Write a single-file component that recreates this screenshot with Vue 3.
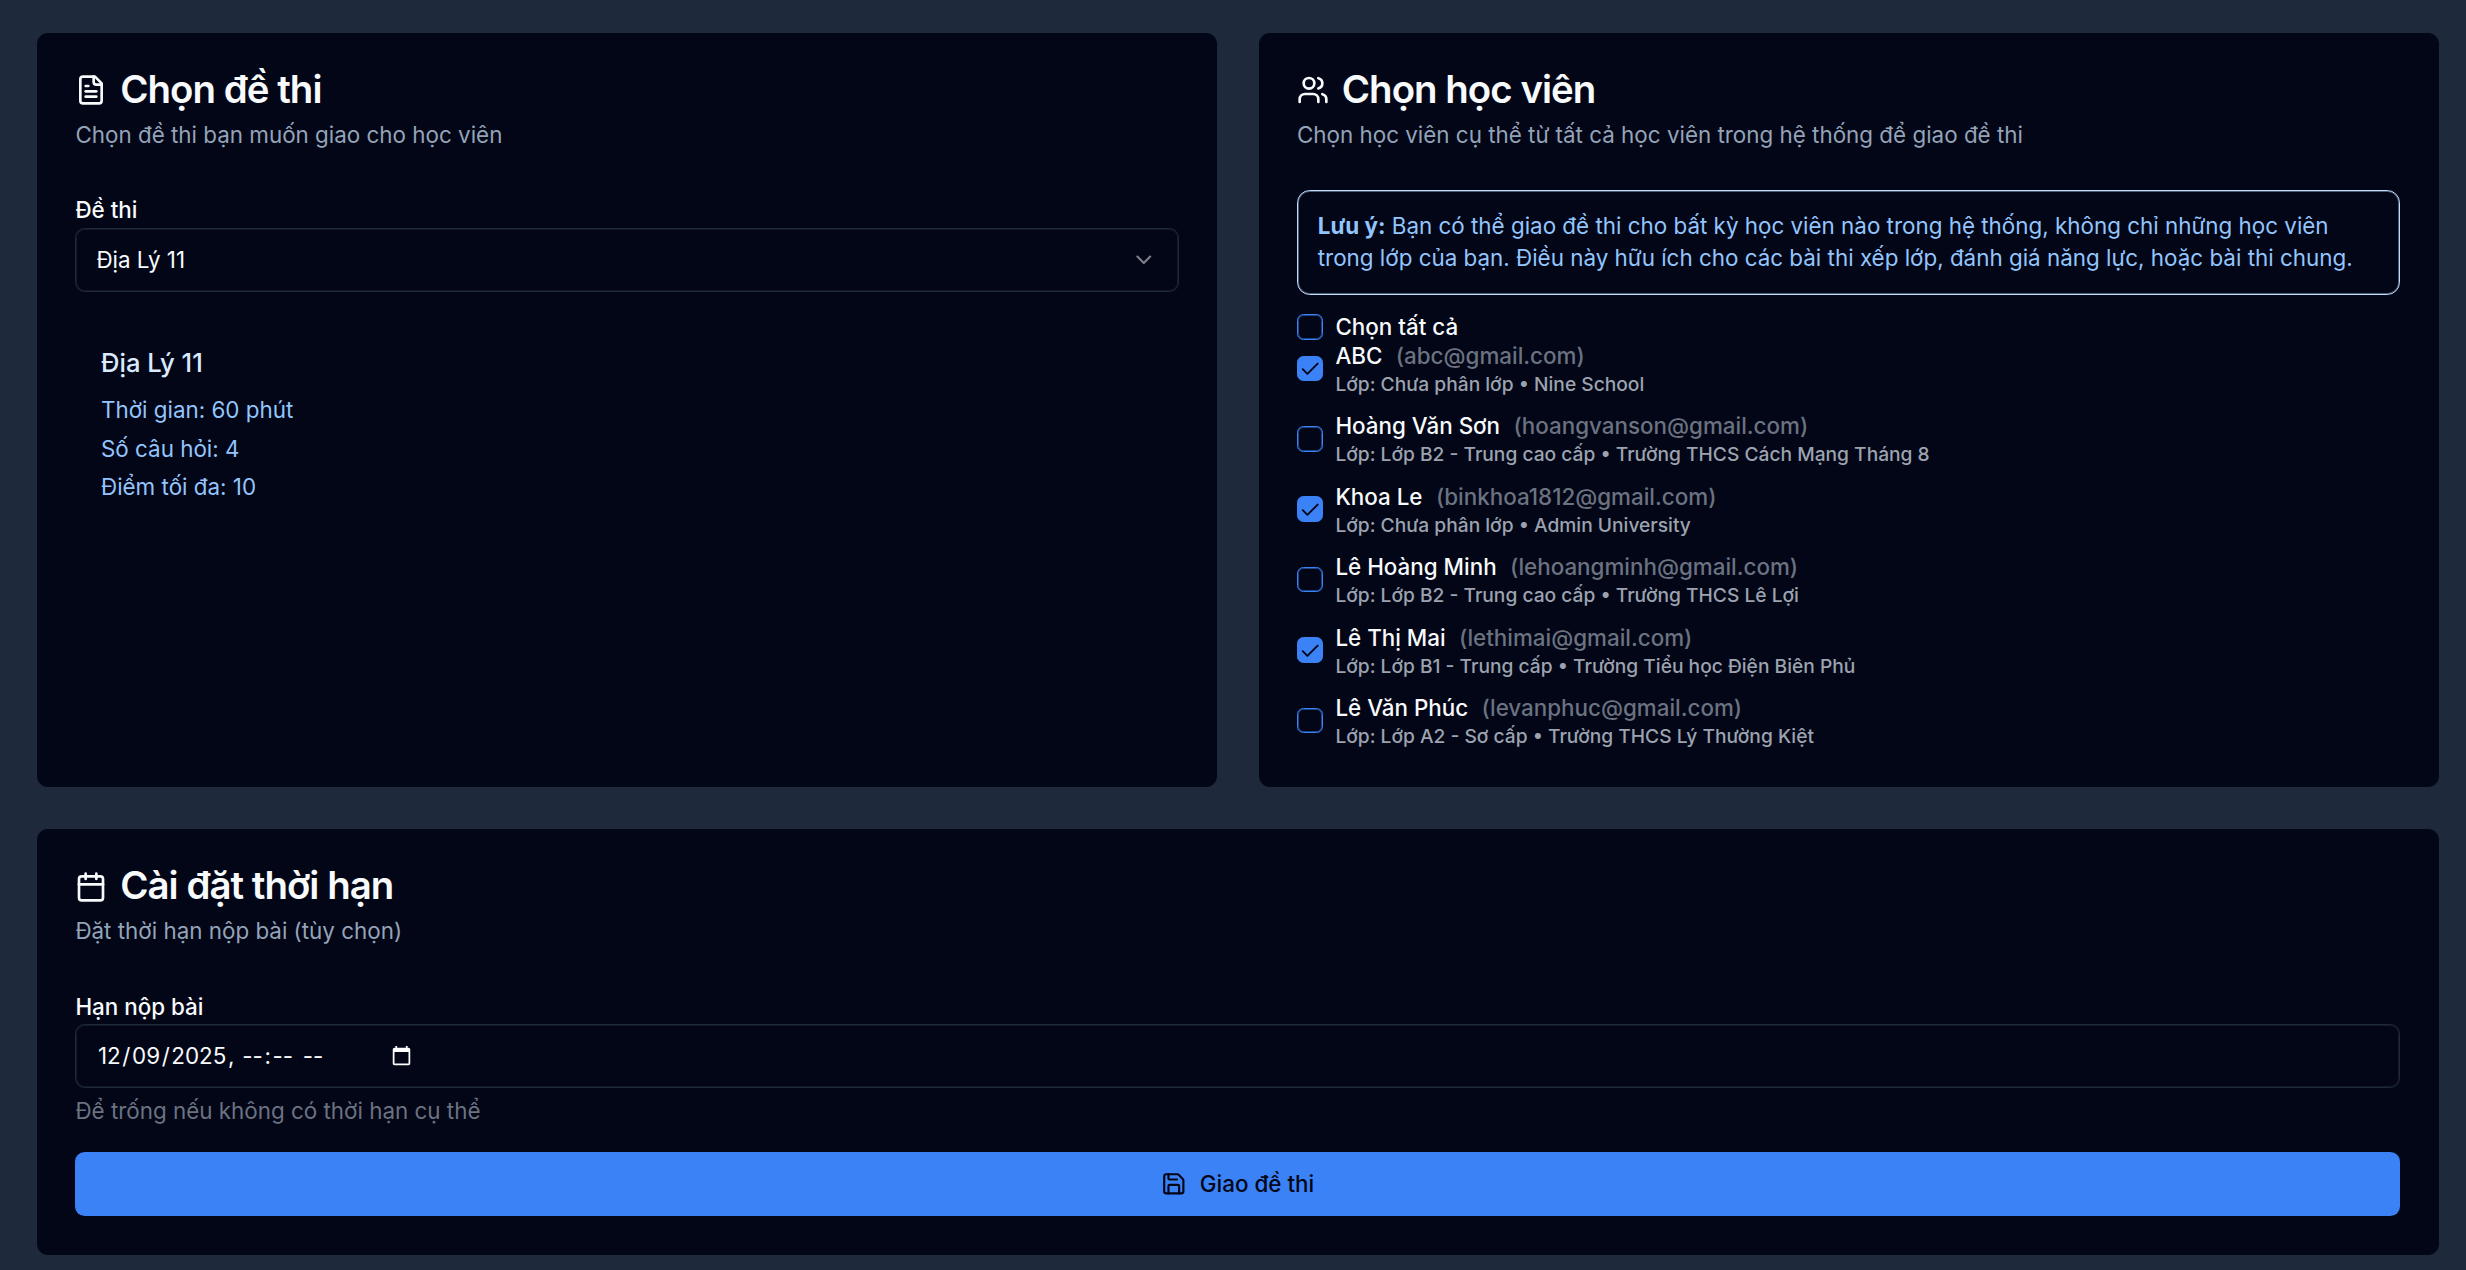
<script setup>
import { ref } from 'vue'

const students = ref([
  { name: 'ABC', email: 'abc@gmail.com', info: 'Lớp: Chưa phân lớp • Nine School', checked: true },
  { name: 'Hoàng Văn Sơn', email: 'hoangvanson@gmail.com', info: 'Lớp: Lớp B2 - Trung cao cấp • Trường THCS Cách Mạng Tháng 8', checked: false },
  { name: 'Khoa Le', email: 'binkhoa1812@gmail.com', info: 'Lớp: Chưa phân lớp • Admin University', checked: true },
  { name: 'Lê Hoàng Minh', email: 'lehoangminh@gmail.com', info: 'Lớp: Lớp B2 - Trung cao cấp • Trường THCS Lê Lợi', checked: false },
  { name: 'Lê Thị Mai', email: 'lethimai@gmail.com', info: 'Lớp: Lớp B1 - Trung cấp • Trường Tiểu học Điện Biên Phủ', checked: true },
  { name: 'Lê Văn Phúc', email: 'levanphuc@gmail.com', info: 'Lớp: Lớp A2 - Sơ cấp • Trường THCS Lý Thường Kiệt', checked: false },
])
</script>

<template>
  <main class="page">
    <div class="columns">
      <section class="card">
        <header class="header">
          <h3 class="title">
            <svg class="icon" viewBox="0 0 24 24">
              <path d="M15 2H6a2 2 0 0 0-2 2v16a2 2 0 0 0 2 2h12a2 2 0 0 0 2-2V7Z" />
              <path d="M14 2v4a2 2 0 0 0 2 2h4" />
              <path d="M10 9H8" /><path d="M16 13H8" /><path d="M16 17H8" />
            </svg>
            <span>Chọn đề thi</span>
          </h3>
          <p class="desc">Chọn đề thi bạn muốn giao cho học viên</p>
        </header>
        <div class="label">Đề thi</div>
        <div class="control select">
          <span>Địa Lý 11</span>
          <svg class="chevron" viewBox="0 0 24 24"><path d="m6 9 6 6 6-6" /></svg>
        </div>
        <div class="exam">
          <h4 class="exam-name">Địa Lý 11</h4>
          <p>Thời gian: 60 phút</p>
          <p>Số câu hỏi: 4</p>
          <p>Điểm tối đa: 10</p>
        </div>
      </section>

      <section class="card">
        <header class="header">
          <h3 class="title">
            <svg class="icon" viewBox="0 0 24 24">
              <path d="M16 21v-2a4 4 0 0 0-4-4H6a4 4 0 0 0-4 4v2" />
              <circle cx="9" cy="7" r="4" />
              <path d="M22 21v-2a4 4 0 0 0-3-3.87" />
              <path d="M16 3.13a4 4 0 0 1 0 7.75" />
            </svg>
            <span>Chọn học viên</span>
          </h3>
          <p class="desc">Chọn học viên cụ thể từ tất cả học viên trong hệ thống để giao đề thi</p>
        </header>
        <div class="note">
          <p><strong>Lưu ý:</strong> <span>Bạn có thể giao đề thi cho bất kỳ học viên nào trong hệ thống, không chỉ những học viên</span></p>
          <p>trong lớp của bạn. Điều này hữu ích cho các bài thi xếp lớp, đánh giá năng lực, hoặc bài thi chung.</p>
        </div>
        <div class="select-all">
          <span class="box"></span>
          <span class="name">Chọn tất cả</span>
        </div>
        <ul class="students">
          <li v-for="s in students" :key="s.email" class="student" @click="s.checked = !s.checked">
            <span class="box" :class="{ checked: s.checked }">
              <svg v-if="s.checked" viewBox="0 0 24 24"><path d="M20 6 9 17l-5-5" /></svg>
            </span>
            <div>
              <div class="line"><span class="name">{{ s.name }}</span><span class="email">({{ s.email }})</span></div>
              <div class="info">{{ s.info }}</div>
            </div>
          </li>
        </ul>
      </section>
    </div>

    <section class="card">
      <header class="header">
        <h3 class="title">
          <svg class="icon" viewBox="0 0 24 24">
            <path d="M8 2v4" /><path d="M16 2v4" />
            <rect width="18" height="18" x="3" y="4" rx="2" />
            <path d="M3 10h18" />
          </svg>
          <span>Cài đặt thời hạn</span>
        </h3>
        <p class="desc">Đặt thời hạn nộp bài (tùy chọn)</p>
      </header>
      <div class="label deadline">Hạn nộp bài</div>
      <div class="control date">
        <div class="fields">
          <span class="f">12</span><span>/</span><span class="f">09</span><span>/</span><span class="f">2025</span><span>,&nbsp;</span><span class="f">--</span><span>:</span><span class="f">--</span><span>&nbsp;</span><span class="f">--</span>
        </div>
        <svg class="picker" viewBox="0 0 24 24"><path d="M20 3h-1V1h-2v2H7V1H5v2H4c-1.1 0-2 .9-2 2v16c0 1.1.9 2 2 2h16c1.1 0 2-.9 2-2V5c0-1.1-.9-2-2-2zm0 18H4V8h16v13z" /></svg>
      </div>
      <p class="hint">Để trống nếu không có thời hạn cụ thể</p>
      <button class="submit">
        <svg class="save" viewBox="0 0 24 24">
          <path d="M15.2 3a2 2 0 0 1 1.4.6l3.8 3.8a2 2 0 0 1 .6 1.4V19a2 2 0 0 1-2 2H5a2 2 0 0 1-2-2V5a2 2 0 0 1 2-2z" />
          <path d="M17 21v-7a1 1 0 0 0-1-1H8a1 1 0 0 0-1 1v7" />
          <path d="M7 3v4a1 1 0 0 0 1 1h7" />
        </svg>
        <span>Giao đề thi</span>
      </button>
    </section>
  </main>
</template>

<style>
body {
  margin: 0;
  background: #1e293b;
}
</style>

<style scoped>
* {
  box-sizing: border-box;
  margin: 0;
  padding: 0;
}
.page {
  height: 1270px;
  padding: 32.8px 27.4px 0 37px;
  display: flex;
  flex-direction: column;
  gap: 41.6px;
  overflow: hidden;
  background: #1e293b;
  color: #f8fafc;
  font-family: Inter, sans-serif;
  font-size: 22.4px;
  line-height: 32px;
}
.columns {
  display: grid;
  grid-template-columns: 1fr 1fr;
  gap: 41.6px;
  height: 754.6px;
}
.card {
  padding: 38.4px;
  border-radius: 11.2px;
  background: #020617;
}
.header {
  display: flex;
  flex-direction: column;
  gap: 9.6px;
  margin-bottom: 38.4px;
}
.title {
  display: flex;
  align-items: center;
  gap: 12.8px;
  height: 38.4px;
  font-size: 38.4px;
  font-weight: 600;
  line-height: 38.4px;
  letter-spacing: -0.96px;
}
.title span {
  padding-bottom: 2.6px;
}
svg {
  display: block;
  fill: none;
  stroke: currentColor;
  stroke-width: 2;
  stroke-linecap: round;
  stroke-linejoin: round;
  flex: none;
}
.icon {
  width: 32px;
  height: 32px;
}
.desc {
  color: #94a3b8;
}
.label {
  height: 38.4px;
  line-height: 39px;
  font-weight: 500;
}
.deadline {
  line-height: 41px;
}
.control {
  display: flex;
  align-items: center;
  height: 64px;
  padding: 0 20px;
  border: 1px solid #1e293b;
  box-shadow: inset 0 0 0 1px rgba(30, 41, 59, 0.6);
  border-radius: 9.6px;
}
.select {
  justify-content: space-between;
}
.chevron {
  width: 25.6px;
  height: 25.6px;
  margin-right: 1px;
  opacity: 0.5;
}
.exam {
  display: flex;
  flex-direction: column;
  gap: 6.4px;
  margin-top: 25.6px;
  padding: 25.6px;
  color: #93c5fd;
}
.exam-name {
  height: 38.4px;
  margin-bottom: 6.4px;
  font-size: 25.6px;
  font-weight: 500;
  line-height: 40.4px;
  color: #dbeafe;
}
.note {
  height: 105.6px;
  padding: 19.8px;
  border: 1px solid #bfdbfe;
  box-shadow: inset 0 0 0 1px rgba(191, 219, 254, 0.4);
  border-radius: 12.8px;
  color: #93c5fd;
  white-space: nowrap;
}
.note strong {
  font-weight: 700;
}
.select-all {
  display: flex;
  align-items: center;
  gap: 12.8px;
  height: 25.6px;
  margin-top: 19.2px;
}
.box {
  flex: none;
  display: flex;
  align-items: center;
  justify-content: center;
  width: 25.6px;
  height: 25.6px;
  border: 1px solid #3b82f6;
  box-shadow: inset 0 0 0 1px rgba(59, 130, 246, 0.5);
  border-radius: 6.4px;
  color: #020617;
}
.box.checked {
  padding-top: 2px;
  background: #3b82f6;
}
.box svg {
  width: 22.4px;
  height: 22.4px;
}
.name {
  font-weight: 500;
}
.students {
  display: flex;
  flex-direction: column;
  gap: 19.2px;
  margin-top: 3px;
  list-style: none;
}
.student {
  display: flex;
  align-items: center;
  gap: 12.8px;
  height: 51.2px;
}
.line {
  height: 28px;
  line-height: 30px;
}
.email {
  margin-left: 13.4px;
  font-weight: 500;
  color: #6b7280;
}
.info {
  height: 27px;
  font-size: 19.2px;
  line-height: 30px;
  font-weight: 500;
  color: #9ca3af;
}
.fields {
  display: flex;
  width: 295px;
  white-space: pre;
}
.f {
  padding: 0 1.6px;
}
.picker {
  width: 21px;
  height: 21px;
  margin-bottom: 2px;
  fill: #fff;
  stroke: none;
}
.hint {
  margin-top: 6.4px;
  color: #6b7280;
}
.submit {
  display: flex;
  align-items: center;
  justify-content: center;
  gap: 12.8px;
  width: 100%;
  height: 64px;
  margin-top: 25.6px;
  border: 0;
  border-radius: 9.6px;
  background: #3b82f6;
  color: #020617;
  font: 500 22.4px/32px Inter, sans-serif;
}
.save {
  width: 25.6px;
  height: 25.6px;
}
</style>
